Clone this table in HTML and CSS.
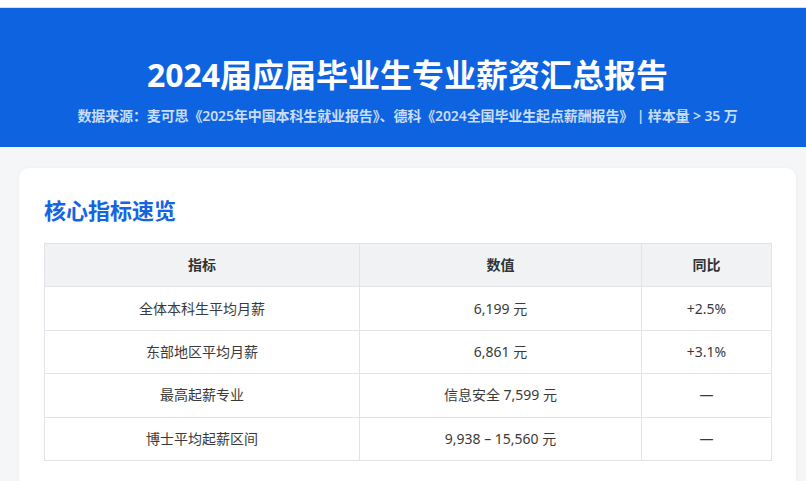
FILE: index.html
```html
<!DOCTYPE html>
<html lang="zh-CN">
<head>
<meta charset="utf-8">
<title>2024届应届毕业生专业薪资汇总报告</title>
<link rel="stylesheet" href="styles.css">
</head>
<body>
<div class="page">
  <div class="topbar"></div>
  <header class="hero">
    <h1 class="hero-title">2024届应届毕业生专业薪资汇总报告</h1>
    <p class="hero-sub">数据来源：麦可思《2025年中国本科生就业报告》、德科《2024全国毕业生起点薪酬报告》 | 样本量 &gt; 35 万</p>
  </header>
  <main class="main">
    <section class="card">
      <h2 class="card-title">核心指标速览</h2>
      <table class="kpi">
        <colgroup>
          <col class="c1"><col class="c2"><col class="c3">
        </colgroup>
        <thead>
          <tr><th>指标</th><th>数值</th><th>同比</th></tr>
        </thead>
        <tbody>
          <tr><td>全体本科生平均月薪</td><td>6,199 元</td><td>+2.5%</td></tr>
          <tr><td>东部地区平均月薪</td><td>6,861 元</td><td>+3.1%</td></tr>
          <tr><td>最高起薪专业</td><td>信息安全 7,599 元</td><td>—</td></tr>
          <tr><td>博士平均起薪区间</td><td>9,938 – 15,560 元</td><td>—</td></tr>
        </tbody>
      </table>
    </section>
  </main>
</div>
</body>
</html>
```
FILE: styles.css
```css
html, body {
  margin: 0;
  padding: 0;
}
body {
  background: #f5f6f8;
  font-family: "Noto Sans", "Noto Sans CJK SC", sans-serif;
  color: #333;
  overflow: hidden;
}
.page {
  width: 815px;
}
.topbar {
  height: 7px;
  background: #fff;
  border-bottom: 1px solid #dcdde0;
}
.hero {
  background: #0e64e0;
  color: #fff;
  text-align: center;
  padding: 46px 20px 21px;
}
.hero-title {
  margin: 0;
  font-size: 32px;
  line-height: 42px;
  font-weight: 700;
}
.hero-sub {
  margin: 10px 0 0;
  font-size: 14px;
  line-height: 20px;
  font-weight: 600;
  letter-spacing: -0.12px;
  color: rgba(255, 255, 255, 0.78);
}
.main {
  padding: 21px 19px 0;
}
.card {
  background: #fff;
  border-radius: 10px;
  padding: 26px 25px 30px;
  box-shadow: 0 1px 4px rgba(0, 0, 0, 0.05);
}
.card-title {
  margin: 0 0 17px;
  font-size: 22px;
  line-height: 32px;
  font-weight: 700;
  color: #1565e0;
}
.kpi {
  width: 100%;
  border-collapse: collapse;
  font-size: 14px;
  table-layout: fixed;
}
.kpi .c1 { width: 315px; }
.kpi .c2 { width: 282px; }
.kpi .c3 { width: 130px; }
.kpi th, .kpi td {
  border: 1px solid #e0e3e8;
  text-align: center;
  height: 42.4px;
  padding: 0 10px;
  line-height: 20px;
}
.kpi th {
  background: #f1f2f4;
  font-weight: 700;
  color: #333;
}
.kpi td {
  color: #3a3a3a;
}
```
